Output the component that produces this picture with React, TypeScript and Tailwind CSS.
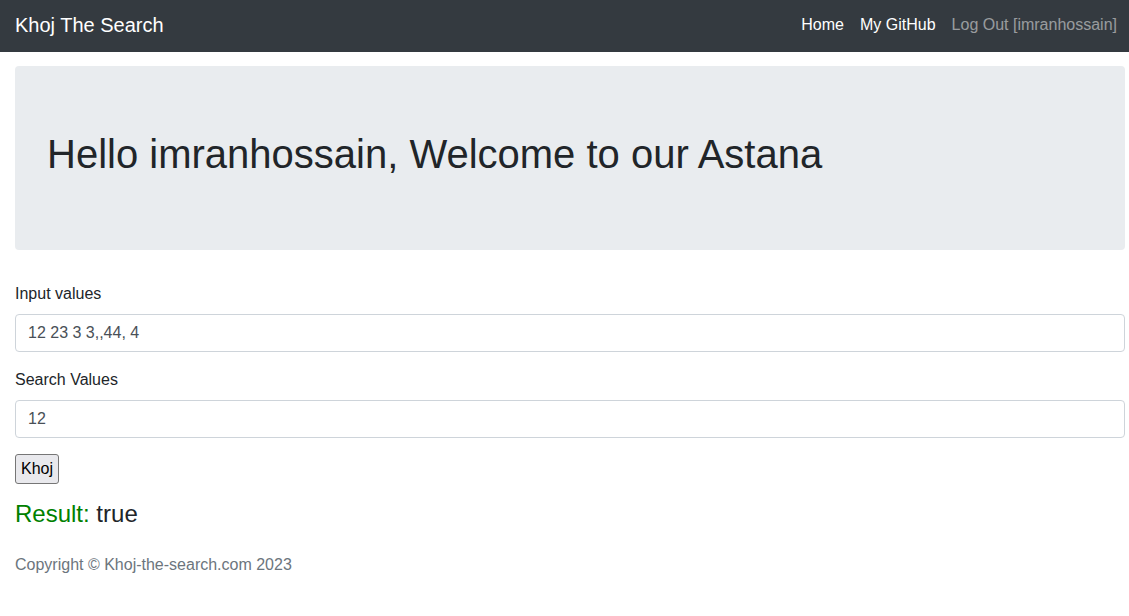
export default function App() {
  return (
    <div
      style={{ fontFamily: "'Liberation Sans', Arial, sans-serif" }}
      className="bg-white text-[16px] leading-[1.5] text-[#212529]"
    >
      {/* Navbar */}
      <nav className="flex h-[52px] items-center justify-between bg-[#343a40] pr-[4px] pl-[15px] pb-[3px]">
        <a className="text-[20px] text-white">Khoj The Search</a>
        <div className="flex items-center pt-[1px]">
          <a className="px-2 text-white">Home</a>
          <a className="px-2 text-white">My GitHub</a>
          <a className="px-2 text-white/50">Log Out [imranhossain]</a>
        </div>
      </nav>

      <div className="pr-[4px] pl-[15px] pb-6">
        {/* Jumbotron */}
        <div className="mt-[14px] mb-8 rounded-[4px] bg-[#e9ecef] px-8 pt-16 pb-[64px]">
          <h1 className="mb-2 text-[40px] leading-[1.2] font-normal">
            Hello imranhossain, Welcome to our Astana
          </h1>
        </div>

        {/* Form */}
        <form>
          <div className="mb-4">
            <label className="mb-2 block">Input values</label>
            <input
              readOnly
              value="12 23 3 3,,44, 4"
              className="block h-[38px] w-full rounded-[4px] border border-[#ced4da] px-3 text-[#495057] outline-none"
            />
          </div>
          <div className="mb-4">
            <label className="mb-2 block">Search Values</label>
            <input
              readOnly
              value="12"
              className="block h-[38px] w-full rounded-[4px] border border-[#ced4da] px-3 text-[#495057] outline-none"
            />
          </div>
          <button
            type="button"
            className="h-[30px] rounded-[3px] border border-[#767676] bg-[#e9e9ed] px-[5px] text-[16px] text-black"
          >
            Khoj
          </button>
        </form>

        <h4 className="mt-4 text-[24px] leading-[1.2]">
          <span className="text-[#008000]">Result:</span> true
        </h4>

        <footer className="mt-6 text-[#6c757d]">
          Copyright © Khoj-the-search.com 2023
        </footer>
      </div>
    </div>
  );
}
